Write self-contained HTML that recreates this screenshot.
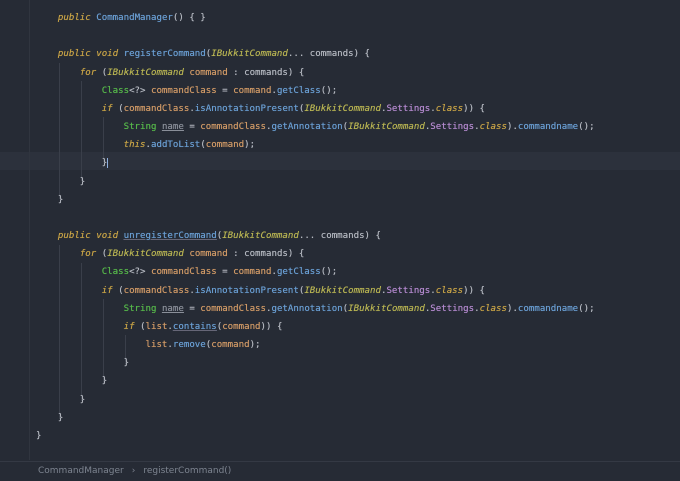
<!DOCTYPE html>
<html><head><style>
html,body{margin:0;padding:0;background:#262b35;width:680px;height:480px;overflow:hidden}
.code{position:absolute;left:36px;top:9px;font-family:"DejaVu Sans Mono","Liberation Mono",monospace;font-size:9.1px;line-height:18.17px;color:#b4b8c0;white-space:pre;font-weight:500;text-shadow:0 0 0.4px currentColor}
.k{color:#c9a446;font-style:italic}
.m{color:#6a9fd4}
.t{color:#b8b452;font-style:italic}
.g{color:#56b84a}
.v{color:#d19a66}
.p{color:#b58ad0}
.u{text-decoration:underline;text-decoration-color:#667}
.n{color:#8a8f99;text-decoration:underline}
.hl{position:absolute;left:0;top:152px;width:680px;height:18px;background:#2c313c}
.guide{position:absolute;width:1px;background:#3a3f4a}
.gut{position:absolute;left:29px;top:0;width:1px;height:460px;background:#30353f}
.status{position:absolute;left:0;top:461px;width:680px;height:19px;border-top:1px solid #343944;background:#262b35;font-family:"DejaVu Sans","Liberation Sans",sans-serif;font-size:9px;color:#7d8490;line-height:19px}
.cur{border-left:1px solid #8fb0e0}
</style></head><body>
<div class="hl"></div>
<div class="gut"></div>
<div class="guide" style="left:59px;top:63px;height:136px"></div>
<div class="guide" style="left:81px;top:81px;height:100px"></div>
<div class="guide" style="left:103px;top:117px;height:45px"></div>
<div class="guide" style="left:59px;top:245px;height:174px"></div>
<div class="guide" style="left:81px;top:263px;height:138px"></div>
<div class="guide" style="left:103px;top:299px;height:84px"></div>
<div class="guide" style="left:125px;top:335px;height:29px"></div>
<div class="code">    <span class="k">public</span> <span class="m">CommandManager</span>() { }

    <span class="k">public void</span> <span class="m">registerCommand</span>(<span class="t">IBukkitCommand</span>... commands) {
        <span class="k">for</span> (<span class="t">IBukkitCommand</span> <span class="v">command</span> : commands) {
            <span class="g">Class</span>&lt;?&gt; <span class="v">commandClass</span> = <span class="v">command</span>.<span class="m">getClass</span>();
            <span class="k">if</span> (<span class="v">commandClass</span>.<span class="m">isAnnotationPresent</span>(<span class="t">IBukkitCommand</span>.<span class="p">Settings</span>.<span class="k">class</span>)) {
                <span class="g">String</span> <span class="n">name</span> = <span class="v">commandClass</span>.<span class="m">getAnnotation</span>(<span class="t">IBukkitCommand</span>.<span class="p">Settings</span>.<span class="k">class</span>).<span class="m">commandname</span>();
                <span class="k">this</span>.<span class="m">addToList</span>(<span class="v">command</span>);
            }<span class="cur"></span>
        }
    }

    <span class="k">public void</span> <span class="m u">unregisterCommand</span>(<span class="t">IBukkitCommand</span>... commands) {
        <span class="k">for</span> (<span class="t">IBukkitCommand</span> <span class="v">command</span> : commands) {
            <span class="g">Class</span>&lt;?&gt; <span class="v">commandClass</span> = <span class="v">command</span>.<span class="m">getClass</span>();
            <span class="k">if</span> (<span class="v">commandClass</span>.<span class="m">isAnnotationPresent</span>(<span class="t">IBukkitCommand</span>.<span class="p">Settings</span>.<span class="k">class</span>)) {
                <span class="g">String</span> <span class="n">name</span> = <span class="v">commandClass</span>.<span class="m">getAnnotation</span>(<span class="t">IBukkitCommand</span>.<span class="p">Settings</span>.<span class="k">class</span>).<span class="m">commandname</span>();
                <span class="k">if</span> (<span class="v">list</span>.<span class="m u">contains</span>(<span class="v">command</span>)) {
                    <span class="v">list</span>.<span class="m">remove</span>(<span class="v">command</span>);
                }
            }
        }
    }
}</div>
<div class="status"><span style="margin-left:38px">CommandManager</span><span style="margin:0 8px">›</span><span>registerCommand()</span></div>
</body></html>
